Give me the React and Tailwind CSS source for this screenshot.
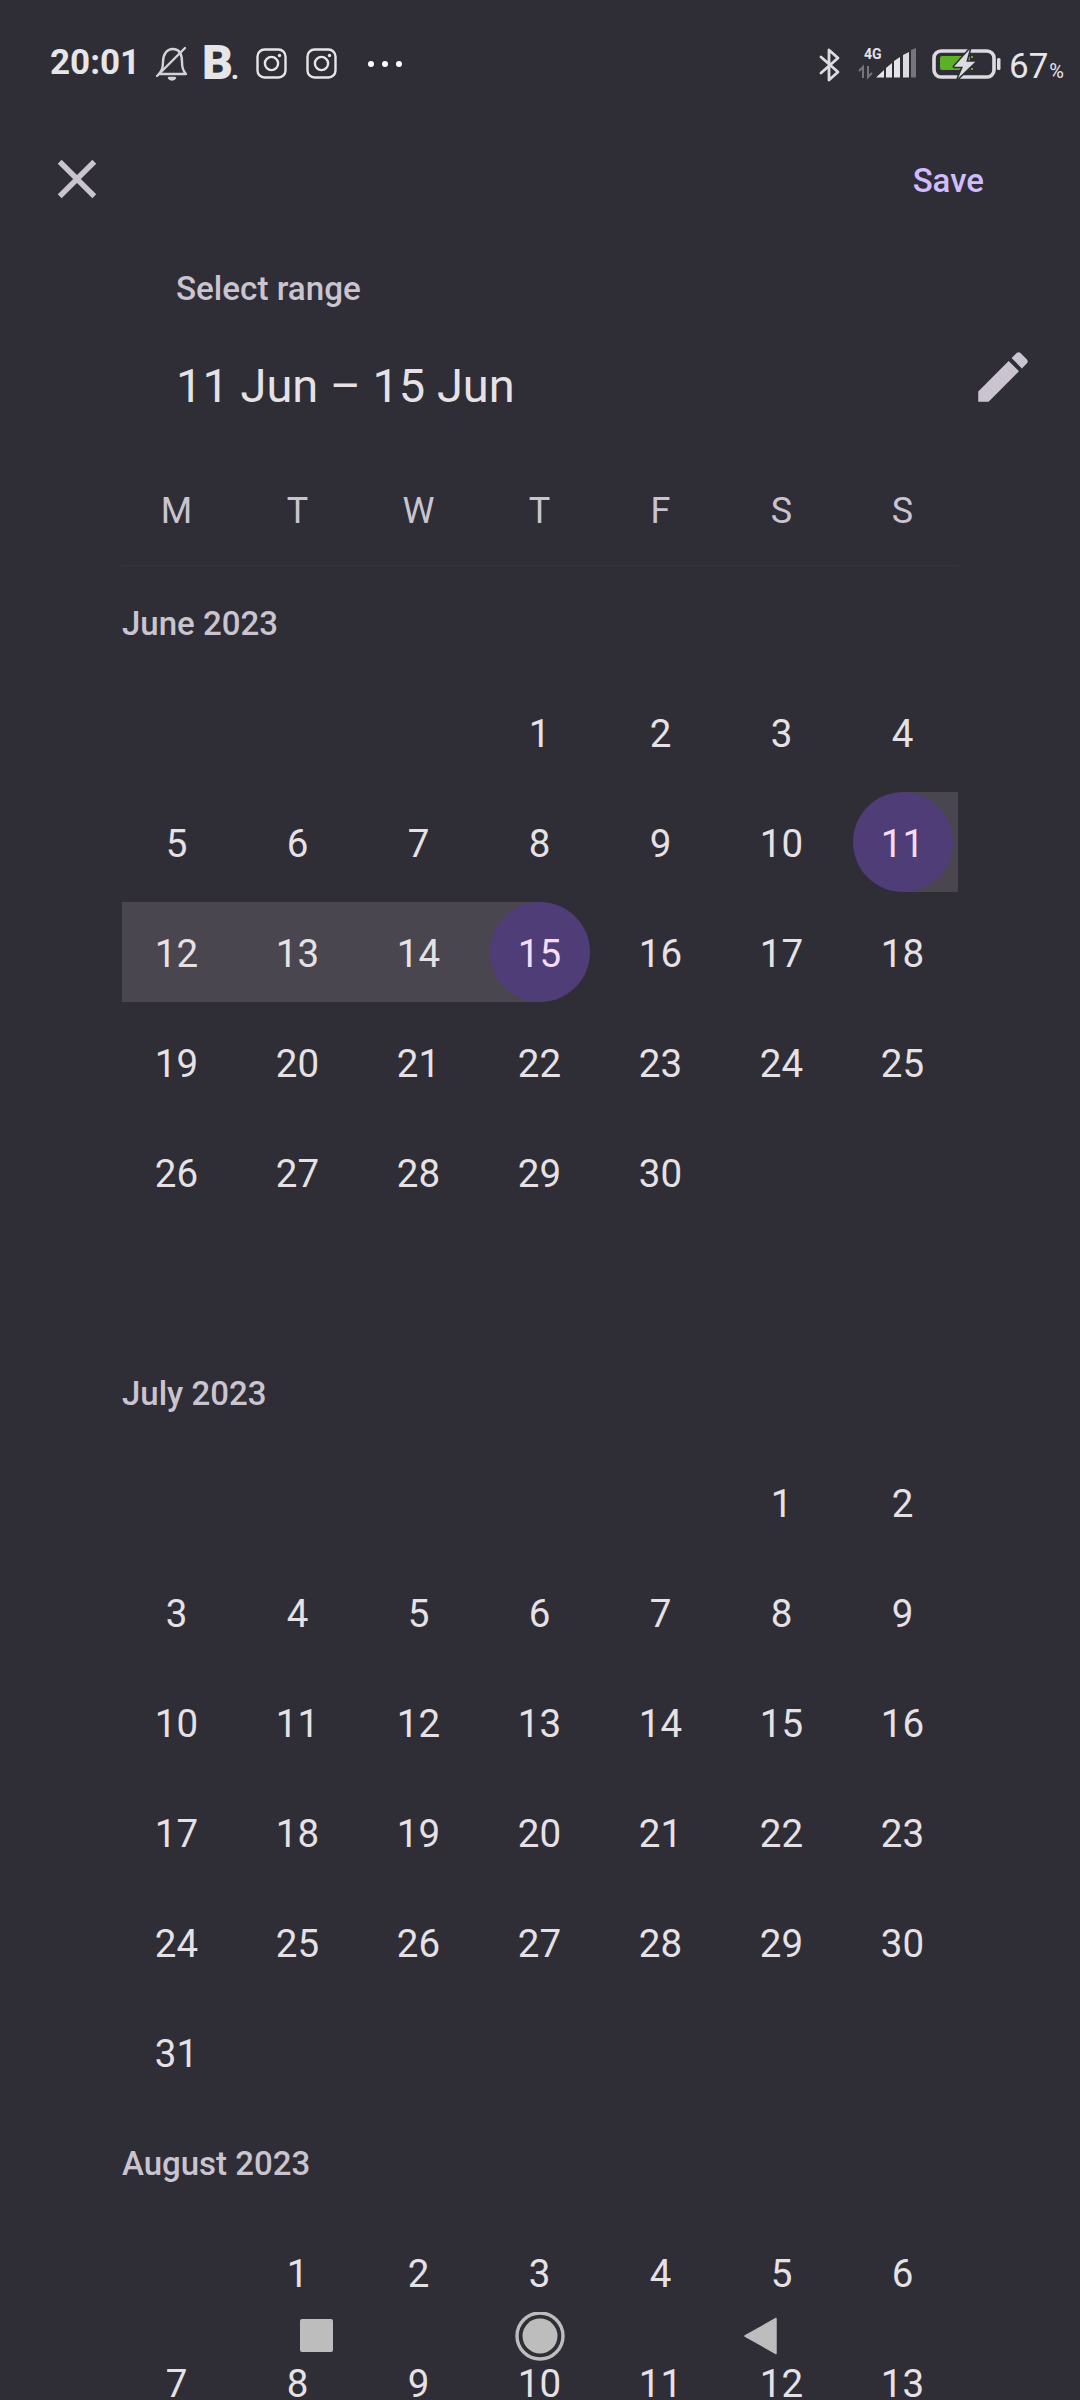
const font = { fontFamily: 'Roboto, sans-serif' };

function Bell() {
  return (
    <svg width="34" height="36" viewBox="0 0 34 36" fill="none" stroke="#d4d2d6" strokeWidth="2.4" strokeLinecap="round" strokeLinejoin="round">
      <path d="M4 28 C7 25 8 22 8 16 C8 8 12 3 18 3 C24 3 27 8 27 16 C27 22 28 25 31 28 Z" />
      <path d="M14 32 C15 34 19 34 20 32 Z" fill="#d4d2d6" />
      <path d="M2 30 L30 2" />
    </svg>
  );
}

function Insta() {
  return (
    <svg width="31" height="31" viewBox="0 0 31 31" fill="none" stroke="#e6e5e8" strokeWidth="2.4">
      <rect x="1.5" y="1.5" width="28" height="28" rx="7" />
      <circle cx="15.5" cy="15.5" r="6.6" />
      <circle cx="23.5" cy="7.5" r="1.7" fill="#e6e5e8" stroke="none" />
    </svg>
  );
}

function Bluetooth() {
  return (
    <svg width="24" height="36" viewBox="0 0 24 36" fill="none" stroke="#dcdbdf" strokeWidth="2.8" strokeLinejoin="round" strokeLinecap="round">
      <path d="M3 10 L20 25 L11 33 L11 3 L20 11 L3 26" />
    </svg>
  );
}

function Network() {
  return (
    <svg width="62" height="36" viewBox="0 -2 62 36">
      <text x="6" y="11.5" fontFamily="Roboto, sans-serif" fontWeight="700" fontSize="14" fill="#e4e3e6">4G</text>
      <path d="M5 31 V20 L1 24 M10 19 V30 L14 26" fill="none" stroke="#77757c" strokeWidth="2" />
      <path d="M18 30.5 L26 23 V30.5 Z" fill="#e4e3e6" />
      <path d="M28 30.5 V21 L34 16 V30.5 Z" fill="#e4e3e6" />
      <path d="M36 30.5 V14 L42 10 V30.5 Z" fill="#e4e3e6" />
      <path d="M45 30.5 V8 L51 5 V30.5 Z" fill="#dcdbdf" />
      <path d="M53 30.5 V3 L58 1 V30.5 Z" fill="#77757c" />
    </svg>
  );
}

function Battery() {
  return (
    <svg width="70" height="34" viewBox="0 0 70 34">
      <rect x="2" y="4" width="60" height="26" rx="7" fill="none" stroke="#dcdbdf" strokeWidth="3.6" />
      <rect x="8" y="9" width="30" height="14" rx="2" fill="#5cb025" />
      <rect x="39" y="9" width="2" height="2" fill="#5cb025" />
      <rect x="39" y="21" width="2" height="2" fill="#5cb025" />
      <rect x="65" y="11" width="3.5" height="12" rx="1.5" fill="#dcdbdf" />
      <path d="M37.7 2.3 L22 19.7 H31 L26 31.3 L43.3 14.7 H34.3 Z" fill="#dcdbdf" stroke="#2f2d36" strokeWidth="3" paintOrder="stroke" strokeLinejoin="round" />
    </svg>
  );
}

function StatusBar() {
  return (
    <div className="h-[130px] flex items-start pt-[46px] pl-[50px] pr-[16px] text-[#e6e5e8]" style={font}>
      <span className="text-[35px] leading-[34px] font-bold w-[105px]">20:01</span>
      <Bell />
      <span className="ml-[13px] -mt-[7px] text-[48px] leading-[48px] font-black w-[37px] tracking-[-2px]">
        B<span className="text-[26px]">.</span>
      </span>
      <div className="ml-[17px] mt-[2px] flex gap-[19px]">
        <Insta />
        <Insta />
      </div>
      <div className="ml-[31px] mt-[15px] flex gap-[8px]">
        <span className="block size-[6px] rounded-full bg-white" />
        <span className="block size-[6px] rounded-full bg-white" />
        <span className="block size-[6px] rounded-full bg-white" />
      </div>
      <div className="ml-auto flex items-start">
        <div className="mt-[1px]"><Bluetooth /></div>
        <div className="ml-[16px] -mt-[1px]"><Network /></div>
        <div className="ml-[12px] mt-[1px]"><Battery /></div>
        <span className="ml-[7px] mt-[1px] text-[35px] leading-[40px] text-[#e6e5e8]">67<span className="text-[20px] ml-[1px]">%</span></span>
      </div>
    </div>
  );
}

function Header() {
  return (
    <div style={font}>
      <div className="h-[98px] flex items-center justify-between pl-[44px] pr-[96px]">
        <svg width="66" height="66" viewBox="0 0 24 24" fill="#cac4d0">
          <path d="M19 6.41L17.59 5 12 10.59 6.41 5 5 6.41 10.59 12 5 17.59 6.41 19 12 13.41 17.59 19 19 17.59 13.41 12z" />
        </svg>
        <span className="text-[33px] font-medium text-[#d0bcff] mt-[4px]">Save</span>
      </div>
      <div className="h-[54px] mt-[34px] pl-[176px] flex items-center text-[33.2px] font-medium text-[#cac4d0]">Select range</div>
      <div className="h-[100px] mt-[20px] pl-[176px] pr-[44px] flex items-center justify-between">
        <span className="text-[47px] text-[#e6e1e5]">11 Jun – 15 Jun</span>
        <svg width="66" height="66" viewBox="0 0 24 24" fill="#cac4d0" className="-mt-[18px]">
          <path d="M3 17.25V21h3.75L17.81 9.94l-3.75-3.75L3 17.25zM20.71 7.04c.39-.39.39-1.02 0-1.41l-2.34-2.34c-.39-.39-1.02-.39-1.41 0l-1.83 1.83 3.75 3.75 1.83-1.83z" />
        </svg>
      </div>
    </div>
  );
}

const WEEK = ['M', 'T', 'W', 'T', 'F', 'S', 'S'];

function Weekdays() {
  return (
    <div className="pl-[116px]" style={font}>
      <div className="grid grid-cols-[repeat(7,121px)] h-[110px] mt-[19px] pt-[2px] items-center text-center text-[36px] text-[#cac4d0]">
        {WEEK.map((d, i) => <span key={i}>{d}</span>)}
      </div>
      <div className="ml-[6px] mb-[1px] w-[836px] h-[1px] bg-[#383536]" />
    </div>
  );
}

function Day({ n, start, end, middle, firstCol }) {
  const selected = start || end;
  return (
    <div className="relative h-[110px] flex items-center justify-center">
      {middle && <div className={`absolute top-[5px] bottom-[5px] right-0 bg-[#49464f] ${firstCol ? 'left-[6px]' : 'left-0'}`} />}
      {start && <div className="absolute top-[5px] bottom-[5px] left-1/2 right-[5px] bg-[#49464f]" />}
      {end && <div className="absolute top-[5px] bottom-[5px] left-0 right-1/2 bg-[#49464f]" />}
      {selected && <div className="absolute size-[100px] rounded-full bg-[#4f3d78]" />}
      <span className={`relative mt-[4px] text-[38.5px] ${selected ? 'text-[#f6dcfb]' : 'text-[#e6e1e5]'}`}>{n}</span>
    </div>
  );
}

function Month({ title, offset, days, range }) {
  const cells = [];
  for (let i = 0; i < offset; i++) cells.push(<div key={'e' + i} className="h-[110px]" />);
  for (let n = 1; n <= days; n++) {
    cells.push(
      <Day
        key={n}
        n={n}
        start={range && n === range[0]}
        end={range && n === range[1]}
        middle={range && n > range[0] && n < range[1]}
        firstCol={(offset + n - 1) % 7 === 0}
      />
    );
  }
  return (
    <div className="h-[770px]" style={font}>
      <div className="h-[110px] flex items-center pl-[122px] pt-[3px] text-[33px] font-medium text-[#cac4d0]">{title}</div>
      <div className="ml-[116px] grid grid-cols-[repeat(7,121px)]">{cells}</div>
    </div>
  );
}

function NavBar() {
  return (
    <div className="absolute left-0 right-0 top-[2312px] h-[50px]">
      <div className="absolute left-[300px] top-[7px] w-[33px] h-[33px] rounded-[2px] bg-[#bdbdbd]" />
      <svg className="absolute left-[514px] top-0" width="52" height="50" viewBox="0 0 52 50">
        <circle cx="26" cy="24" r="23" fill="none" stroke="#bdbdbd" strokeWidth="3.4" />
        <circle cx="26" cy="24" r="17.5" fill="#bdbdbd" />
      </svg>
      <svg className="absolute left-[742px] top-[5px]" width="36" height="38" viewBox="0 0 36 38">
        <path d="M3 19 L34 1.5 V36.5 Z" fill="#bdbdbd" stroke="#bdbdbd" strokeWidth="1.5" strokeLinejoin="round" />
      </svg>
    </div>
  );
}

export default function App() {
  return (
    <div className="relative w-[1080px] h-[2400px] overflow-hidden bg-[#2f2d36]">
      <StatusBar />
      <Header />
      <Weekdays />
      <Month title="June 2023" offset={3} days={30} range={[11, 15]} />
      <Month title="July 2023" offset={5} days={31} />
      <Month title="August 2023" offset={1} days={31} />
      <NavBar />
    </div>
  );
}
